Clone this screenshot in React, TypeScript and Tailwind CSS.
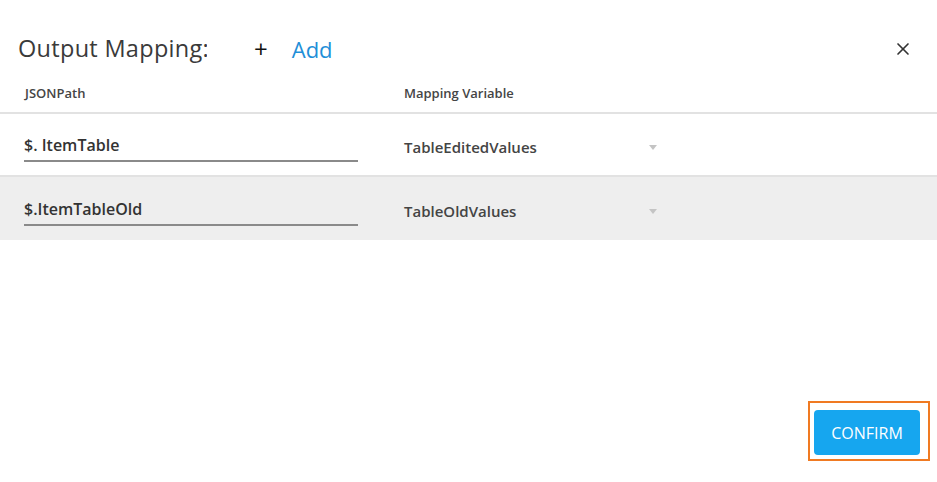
import { X } from 'lucide-react';

const rows = [
    { path: '$. ItemTable', variable: 'TableEditedValues', shaded: false },
    { path: '$.ItemTableOld', variable: 'TableOldValues', shaded: true },
];

export default function App() {
    return (
        <div className="w-[937px] h-[482px] bg-white flex flex-col font-['Open_Sans',sans-serif] text-[#444]">
            {/* Header */}
            <div className="flex items-center h-[68px] pt-[30px] pl-[18px] pr-[24px]">
                <h2 className="w-[189px] overflow-hidden whitespace-nowrap text-[23.5px] text-[#3a3a3a] tracking-[0.3px]">Output Mapping:</h2>
                <button className="ml-[47px] flex items-center text-[22px]">
                    <span className="text-[#111] text-[24px] leading-none">+</span>
                    <span className="ml-[24px] text-[#1f8fd8]">Add</span>
                </button>
                <button className="ml-auto text-[#333]">
                    <X className="w-[20px] h-[20px]" strokeWidth={2} />
                </button>
            </div>

            {/* Column headers */}
            <div className="flex items-center h-[46px] pt-[8px] text-[13px] font-semibold text-[#454545] border-b-2 border-[#e2e2e2]">
                <div className="w-[404px] pl-[25px]">JSONPath</div>
                <div>Mapping Variable</div>
            </div>

            {/* Rows */}
            {rows.map((r, i) => (
                <div
                    key={r.path}
                    className={`flex items-center h-[63px] ${i === 0 ? 'border-b-2 border-[#e2e2e2]' : ''} ${r.shaded ? 'bg-[#eeeeee]' : 'bg-white'}`}
                >
                    <div className="w-[404px] pl-[24px]">
                        <div className="w-[334px] border-b-2 border-[#8a8a8a] pb-[3px] pt-[6px] text-[16px] font-semibold text-[#333]">
                            {r.path}
                        </div>
                    </div>
                    <div className="flex items-center w-[253px] pt-[6px]">
                        <span className="text-[15px] font-semibold text-[#444]">{r.variable}</span>
                        <span className="ml-auto w-0 h-0 border-l-[4px] border-r-[4px] border-t-[5px] border-l-transparent border-r-transparent border-t-[#c4c4c4]" />
                    </div>
                </div>
            ))}

            {/* Footer */}
            <div className="flex-1 flex items-end justify-end pr-[7px] pb-[21px]">
                <div className="border-2 border-[#f07a22] p-[4px] pr-[8px] pt-[7px] pb-[4px]">
                    <button className="w-[106px] h-[45px] rounded-[4px] bg-[#16a6ef] text-white text-[16px]">CONFIRM</button>
                </div>
            </div>
        </div>
    );
}
